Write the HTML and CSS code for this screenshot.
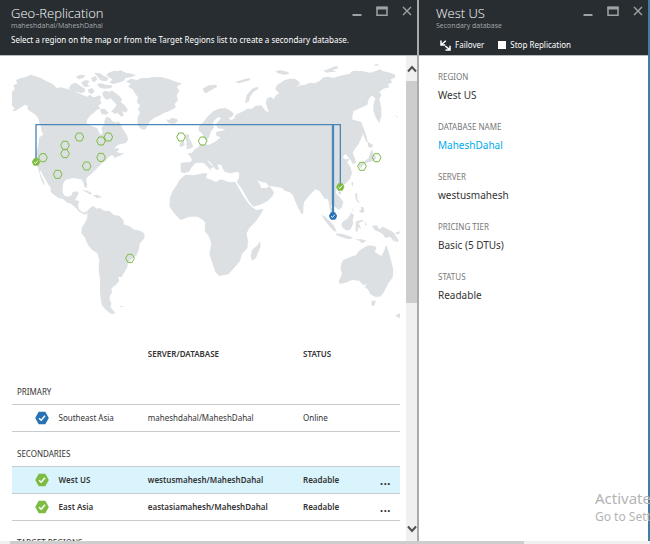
FILE: index.html
```html
<!DOCTYPE html>
<html lang="en">
<head>
    <meta charset="UTF-8">
    <meta name="viewport" content="width=device-width, initial-scale=1.0">
    <title>Geo-Replication</title>
    <link rel="stylesheet" href="styles.css">
</head>
<body>
    <!-- Shared shapes -->
    <svg class="symbols" aria-hidden="true">
        <symbol id="minimize" viewBox="0 0 10 10"><path d="M0.5 9H9.5" stroke="currentColor" stroke-width="2"/></symbol>
        <symbol id="maximize" viewBox="0 0 12 10"><path d="M1 1.5H11V9.3H1Z" fill="none" stroke="currentColor" stroke-width="1.5"/><path d="M0.5 2H11.5" stroke="currentColor" stroke-width="3"/></symbol>
        <symbol id="close" viewBox="0 0 10 10"><path d="M1 1L9 9M9 1L1 9" stroke="currentColor" stroke-width="1.4"/></symbol>
        <symbol id="check" viewBox="0 0 14 14"><path d="M3.7 0.8H10.3L13.8 7L10.3 13.2H3.7L0.2 7Z" fill="currentColor"/><path d="M4 7.2L6.2 9.2L10 4.8" fill="none" stroke="#fff" stroke-width="1.5"/></symbol>
        <symbol id="region" viewBox="-15 -15 30 30" overflow="visible"><path d="M-6.5 -12H6.5L13 0L6.5 12H-6.5L-13 0Z" fill="none" stroke="currentColor" stroke-width="3"/></symbol>
    </svg>

    <main class="blades">
        <section class="blade">
            <header class="blade-header">
                <div class="title-row">
                    <h1>Geo-Replication</h1>
                    <div class="window-buttons">
                        <button type="button" aria-label="Minimize"><svg width="10" height="10"><use href="#minimize"/></svg></button>
                        <button type="button" aria-label="Maximize"><svg width="12" height="10"><use href="#maximize"/></svg></button>
                        <button type="button" aria-label="Close"><svg width="10" height="10"><use href="#close"/></svg></button>
                    </div>
                </div>
                <p class="subtitle">maheshdahal/MaheshDahal</p>
                <p class="hint">Select a region on the map or from the Target Regions list to create a secondary database.</p>
            </header>

            <div class="blade-body">
                <div class="content">
                    <svg class="map" viewBox="36 12 1164 786" role="img" aria-label="World map">
                        <g class="land">
                            <!-- North America -->
                            <path d="M36 108L44 98 40 88 52 82 48 72 62 66 80 62 92 56 104 60 122 66 140 76 158 84 170 96 184 94 200 98 218 104 236 112 250 118 262 122 270 116 280 124 288 122 296 118 304 122 300 134 306 140 296 148 300 158 290 162 282 170 272 178 262 190 260 202 268 208 282 212 292 216 296 228 302 236 308 230 304 216 312 206 314 192 320 182 330 186 338 196 348 200 356 196 364 210 372 224 382 240 384 252 376 262 362 264 352 268 342 278 354 276 358 280 350 288 362 292 372 290 364 298 352 302 340 306 342 300 334 298 322 306 318 314 308 320 300 328 290 338 282 346 274 354 262 364 258 372 262 386 260 396 254 394 250 380 244 370 234 368 222 366 208 368 196 372 190 382 188 396 188 410 194 420 206 422 214 418 218 408 232 406 236 412 230 424 226 432 238 436 234 446 236 458 244 466 252 470 262 464 262 472 254 476 246 472 236 466 228 456 214 444 202 440 190 430 176 426 162 416 152 408 152 396 144 384 136 370 128 356 124 346 120 344 122 356 130 372 136 388 130 384 122 366 118 350 114 336 110 322 106 312 106 296 112 280 116 262 118 244 124 240 130 236 124 224 122 210 118 202 116 190 110 180 100 172 90 166 82 158 84 150 74 146 64 154 54 160 44 166 38 164 44 156 36 150Z"/>
                            <!-- Arctic islands -->
                            <path d="M206 98L212 86 226 80 236 86 246 92 254 98 256 106 244 112 232 108 218 106ZM228 62L240 56 256 58 250 66 236 70ZM244 78L258 72 270 76 262 84 270 90 256 94 248 88ZM274 66L286 60 292 70 284 78 276 76ZM290 84L304 82 316 86 336 88 334 96 316 98 300 96ZM264 100L276 96 284 106 276 114 266 110ZM282 50L300 52 312 60 326 66 320 76 304 74 294 64ZM318 56L330 48 344 44 356 46 360 42 378 50 398 54 408 58 392 64 376 66 372 74 354 80 340 84 328 80 338 70 326 64ZM306 110L316 104 326 108 336 104 348 112 358 120 366 130 362 138 374 148 384 162 376 170 366 164 372 178 364 182 352 170 344 174 334 166 344 156 350 146 340 136 332 126 322 132 312 126ZM300 160L314 158 326 170 318 176 304 174Z"/>
                            <!-- Greenland and Iceland -->
                            <path d="M378 76L394 68 412 72 424 66 444 66 462 62 486 64 504 68 530 78 546 82 530 92 538 104 530 118 534 132 524 144 528 154 510 164 494 170 476 180 462 186 450 196 444 206 438 218 432 222 422 218 414 208 412 196 414 182 420 170 414 160 420 148 410 138 414 124 404 112 398 100 384 92 392 84ZM498 190L508 192 514 186 530 188 534 196 522 204 506 202Z"/>
                            <!-- South America and the Caribbean -->
                            <path transform="translate(0 402)" d="M262 62L270 54 280 48 290 56 300 54 312 62 330 64 340 74 358 78 370 90 372 104 388 108 400 118 424 124 434 132 432 146 420 160 416 180 410 196 396 206 384 216 382 232 372 248 364 262 354 260 358 272 350 282 340 290 334 296 336 308 330 316 328 328 334 340 332 352 346 370 334 372 318 360 306 346 302 326 300 300 300 270 296 240 298 210 292 190 274 178 264 164 254 142 244 130 246 112 254 100 262 84ZM246 0L262 2 276 10 272 14 258 6ZM278 16L292 14 306 22 290 24ZM360 348L370 348 368 351 362 351ZM446 354L453 358 449 358ZM198 106L203 106 202 108Z"/>
                            <g transform="translate(480 120)">
                                <!-- Europe and Asia -->
                                <path d="M62 228L62 200 92 198 96 192 90 180 82 172 96 170 104 160 116 152 120 144 130 146 148 146 164 138 172 132 182 124 170 120 168 108 186 104 196 100 182 98 172 96 168 84 178 72 184 66 174 64 162 74 158 84 162 94 152 108 148 122 140 134 134 128 126 112 116 104 116 92 132 76 144 60 160 46 176 38 196 36 212 44 222 54 216 62 206 66 212 72 222 68 226 58 236 52 250 46 262 38 276 38 286 30 304 28 310 36 318 46 326 48 322 36 318 22 320 8 332 2 340 10 348 -2 358 -8 346 -20 350 -32 362 -40 374 -48 390 -52 404 -52 416 -44 420 -36 406 -26 420 -32 436 -34 450 -40 464 -38 480 -46 490 -56 504 -58 520 -54 538 -60 554 -64 568 -66 576 -74 588 -76 610 -74 630 -70 646 -74 660 -80 670 -74 690 -70 706 -64 704 -54 692 -50 696 -40 684 -36 688 -26 670 -22 658 -12 664 -2 658 10 664 36 664 60 658 82 648 66 640 44 640 26 646 8 636 -2 626 10 622 26 610 32 596 38 580 46 576 70 590 74 604 78 608 92 610 108 604 126 596 144 584 160 578 172 584 184 588 200 578 204 572 192 564 182 556 174 548 184 556 190 568 188 562 200 572 214 576 232 570 248 558 262 544 274 530 280 528 292 540 304 550 318 546 334 536 342 526 334 516 322 512 332 518 344 526 356 532 372 522 368 512 352 508 330 504 310 494 308 486 296 478 284 466 280 456 290 444 304 432 318 430 336 430 352 424 354 414 334 404 312 398 296 388 288 374 284 366 276 346 272 326 270 318 260 304 258 290 252 298 262 304 276 320 276 328 270 342 288 338 300 322 316 300 326 280 332 268 318 256 298 244 276 230 258 236 248 238 230 230 228 212 232 196 228 188 218 184 206 172 206 178 220 168 222 158 208 150 198 140 190 150 204 162 214 152 216 152 224 144 214 130 200 118 200 106 202 96 212 88 226 74 232Z"/>
                                <path d="M76 114L88 116 86 126 94 138 100 152 90 158 76 158 82 152 78 146 80 138 76 126ZM62 138L72 136 74 148 62 154 58 148ZM128 -22L146 -32 168 -34 172 -28 150 -16 138 -8 130 -14ZM255 20L260 -2 275 -20 292 -28 296 -22 280 -12 270 2 266 18ZM226 -42L244 -48 268 -54 272 -48 250 -42 236 -38ZM346 -74L360 -78 384 -72 388 -66 372 -64 354 -68ZM490 -76L504 -80 520 -88 534 -90 532 -82 516 -78 530 -72 512 -72 500 -70ZM642 -94L654 -96 656 -92 646 -90ZM704 58L714 62 712 65Z"/>
                                <!-- Africa and Madagascar -->
                                <path d="M76 236L100 238 130 232 142 232 138 246 156 252 168 258 182 250 206 258 226 258 236 276 250 300 262 318 276 334 290 342 310 338 304 352 288 376 268 396 260 412 264 436 262 456 246 474 240 496 222 516 206 534 178 540 166 528 156 498 148 474 154 444 148 424 134 404 136 380 126 370 112 362 88 362 62 372 42 352 28 330 30 304 38 284 50 268 58 252ZM300 436L302 450 288 486 276 494 272 480 276 462 290 450Z"/>
                                <!-- Japan, Sakhalin and the southeast islands -->
                                <path d="M606 84L612 100 620 122 624 142 618 136 608 112ZM624 138L640 148 634 156 624 152ZM636 160L640 174 650 186 640 196 626 198 612 204 604 216 596 214 598 204 614 196 626 186 630 172ZM576 256L580 262 578 272 574 264ZM534 288L544 286 542 296 536 294Z"/>
                                <path d="M484 356L496 362 510 376 524 392 530 408 520 404 506 388 492 370ZM528 412L548 414 566 420 580 426 566 430 546 424 530 418ZM584 430L604 430 620 434 606 442 598 434ZM550 376L562 368 574 350 582 358 578 372 580 382 572 400 562 404 548 396 544 384ZM588 376L604 372 612 374 596 382 604 400 594 394 592 410 586 402ZM586 290L592 294 592 310 600 322 592 318 586 306ZM602 332L610 334 614 346 606 352 596 344 604 342ZM584 332L578 346 576 344ZM614 376L620 386 616 390ZM636 390L650 388 658 400 668 392 684 400 702 410 706 418 716 432 714 438 700 434 690 422 676 426 670 416 658 408 644 402ZM706 410L718 406 720 412 710 416Z"/>
                                <!-- Australia and New Zealand -->
                                <path transform="translate(120 282)" d="M424 220L430 210 458 198 468 196 476 184 490 174 504 166 522 168 530 172 524 186 544 198 552 184 558 164 564 180 572 206 580 240 578 262 564 282 550 310 540 320 524 320 510 312 504 298 494 292 500 282 490 286 478 272 456 270 436 278 420 282 416 274 426 252 422 236ZM514 332L528 332 522 348 516 348ZM586 376L600 370 600 384 592 382ZM205 192L209 192 209 194Z"/>
                            </g>
                        </g>
                        <!-- Replication links -->
                        <path class="link" d="M108 318V206H1021V393"/>
                        <path class="link link-wide" d="M999 206V480"/>
                        <!-- Available regions -->
                        <g class="green">
                            <use href="#region" x="223" y="228" width="30" height="30"/>
                            <use href="#region" x="180" y="253" width="30" height="30"/>
                            <use href="#region" x="180" y="278" width="30" height="30"/>
                            <use href="#region" x="114" y="290" width="30" height="30"/>
                            <use href="#region" x="158" y="340" width="30" height="30"/>
                            <use href="#region" x="245" y="315" width="30" height="30"/>
                            <use href="#region" x="288" y="289" width="30" height="30"/>
                            <use href="#region" x="288" y="240" width="30" height="30"/>
                            <use href="#region" x="310" y="228" width="30" height="30"/>
                            <use href="#region" x="528" y="228" width="30" height="30"/>
                            <use href="#region" x="593" y="240" width="30" height="30"/>
                            <use href="#region" x="375" y="592" width="30" height="30"/>
                            <use href="#region" x="1071" y="316" width="30" height="30"/>
                            <use href="#region" x="1115" y="290" width="30" height="30"/>
                            <use href="#check" x="95" y="305" width="26" height="26"/>
                            <use href="#check" x="1008" y="380" width="26" height="26"/>
                        </g>
                        <use class="blue" href="#check" x="986" y="467" width="26" height="26"/>
                    </svg>

                    <table class="regions">
                        <colgroup>
                            <col class="col-icon">
                            <col class="col-region">
                            <col class="col-server">
                            <col class="col-status">
                            <col class="col-more">
                        </colgroup>
                        <thead>
                            <tr>
                                <td></td>
                                <td></td>
                                <th scope="col">SERVER/DATABASE</th>
                                <th scope="col">STATUS</th>
                                <td></td>
                            </tr>
                        </thead>
                        <tbody>
                            <tr class="group"><th colspan="5">PRIMARY</th></tr>
                            <tr>
                                <td><svg class="badge blue" width="14" height="14"><use href="#check"/></svg></td>
                                <td>Southeast Asia</td>
                                <td>maheshdahal/MaheshDahal</td>
                                <td>Online</td>
                                <td></td>
                            </tr>
                        </tbody>
                        <tbody class="secondaries">
                            <tr class="group"><th colspan="5">SECONDARIES</th></tr>
                            <tr class="selected">
                                <td><svg class="badge green" width="14" height="14"><use href="#check"/></svg></td>
                                <td>West US</td>
                                <td>westusmahesh/MaheshDahal</td>
                                <td>Readable</td>
                                <td><button type="button" class="more" aria-label="More">...</button></td>
                            </tr>
                            <tr>
                                <td><svg class="badge green" width="14" height="14"><use href="#check"/></svg></td>
                                <td>East Asia</td>
                                <td>eastasiamahesh/MaheshDahal</td>
                                <td>Readable</td>
                                <td><button type="button" class="more" aria-label="More">...</button></td>
                            </tr>
                        </tbody>
                        <tbody>
                            <tr class="group"><th colspan="5">TARGET REGIONS</th></tr>
                        </tbody>
                    </table>
                </div>

                <div class="scrollbar">
                    <button type="button" aria-label="Scroll up"><svg width="10" height="8" viewBox="0 0 10 8"><path d="M1 6.5L5 2L9 6.5" fill="none" stroke="#505050" stroke-width="2"/></svg></button>
                    <div class="track"><div class="thumb"></div></div>
                    <button type="button" aria-label="Scroll down"><svg width="10" height="8" viewBox="0 0 10 8"><path d="M1 1.5L5 6L9 1.5" fill="none" stroke="#505050" stroke-width="2"/></svg></button>
                </div>
            </div>
        </section>

        <section class="blade blade-detail">
            <header class="blade-header">
                <div class="title-row">
                    <h2>West US</h2>
                    <div class="window-buttons">
                        <button type="button" aria-label="Minimize"><svg width="10" height="10"><use href="#minimize"/></svg></button>
                        <button type="button" aria-label="Maximize"><svg width="12" height="10"><use href="#maximize"/></svg></button>
                        <button type="button" aria-label="Close"><svg width="10" height="10"><use href="#close"/></svg></button>
                    </div>
                </div>
                <p class="subtitle">Secondary database</p>
                <div class="commands">
                    <button type="button">
                        <svg width="11" height="11" viewBox="0 0 11 11"><path d="M1 0.5V5H5.2M1.3 4.7L5.8 0.8M10 5.8V10H5.5M9.7 9.7L5.2 6" fill="none" stroke="#fff" stroke-width="1.5"/></svg>
                        Failover
                    </button>
                    <button type="button">
                        <svg width="8" height="8"><rect width="8" height="8" fill="#fff"/></svg>
                        Stop Replication
                    </button>
                </div>
            </header>

            <dl class="properties">
                <div><dt>REGION</dt><dd>West US</dd></div>
                <div><dt>DATABASE NAME</dt><dd><a href="#">MaheshDahal</a></dd></div>
                <div><dt>SERVER</dt><dd>westusmahesh</dd></div>
                <div><dt>PRICING TIER</dt><dd>Basic (5 DTUs)</dd></div>
                <div><dt>STATUS</dt><dd>Readable</dd></div>
            </dl>
        </section>
    </main>

    <div class="page-scroll"><div class="page-thumb"></div></div>

    <div class="watermark">
        <p class="watermark-title">Activate</p>
        <p>Go to Sett</p>
    </div>
</body>
</html>
```

FILE: styles.css
```css
/* General Styles */
* {
    box-sizing: border-box;
}

body {
    display: flex;
    flex-direction: column;
    height: 100vh;
    margin: 0;
    overflow: hidden;
    font-family: "Noto Sans", "Open Sans", sans-serif;
    font-size: 8px;
    line-height: 16px;
    color: #333;
    background: #fff;
}

h1, h2, p, dl, dd {
    margin: 0;
}

button {
    display: flex;
    align-items: center;
    justify-content: center;
    padding: 0;
    border: none;
    background: none;
    color: inherit;
    font: inherit;
    cursor: pointer;
}

.symbols {
    position: absolute;
    width: 0;
    height: 0;
}

.green {
    color: #7dbb42;
}

.blue {
    color: #2672b5;
}

/* Blades */
.blades {
    flex: 1;
    min-height: 0;
    display: grid;
    grid-template-columns: minmax(0, 419fr) minmax(0, 231fr);
    grid-template-rows: minmax(0, 1fr);
}

.blade {
    display: flex;
    flex-direction: column;
    min-height: 0;
    border-right: 2px solid #aaa;
}

.blade-detail {
    border-right-color: #3c7fa3;
}

.blade-header {
    flex: none;
    height: 56px;
    padding: 5px 5px 0 11px;
    background: #272d31;
    border-bottom: 1px solid #b9bcbe;
    color: #fff;
}

.blade-detail .blade-header {
    padding-left: 17px;
}

.title-row {
    display: flex;
    justify-content: space-between;
    height: 15px;
}

h1, h2 {
    font-family: "Open Sans", "Noto Sans", sans-serif;
    font-size: 13px;
    line-height: 17px;
    font-weight: 300;
}

.window-buttons {
    display: flex;
    align-items: center;
    gap: 14px;
    height: 12px;
    color: #9fa3a5;
}

.subtitle {
    font-family: "Open Sans", "Noto Sans", sans-serif;
    font-size: 7px;
    line-height: 12px;
    color: #a5a9ab;
}

.commands {
    display: flex;
    gap: 14px;
    padding-left: 4px;
}

.commands button {
    gap: 4px;
    padding-top: 5px;
}

.blade-body {
    flex: 1;
    min-height: 0;
    display: flex;
}

.content {
    flex: 1;
    min-width: 0;
    overflow: hidden;
    padding: 4px 6px 0 12px;
}

/* Map */
.map {
    display: block;
    width: 100%;
}

.land {
    fill: #dce0e3;
}

.link {
    fill: none;
    stroke: #4a86b8;
    stroke-width: 4;
}

.link-wide {
    stroke-width: 7;
}

/* Regions table */
.regions {
    width: 100%;
    margin-top: 10px;
    table-layout: fixed;
    border-collapse: collapse;
    text-align: left;
}

.col-icon { width: 12%; }
.col-region { width: 23%; }
.col-server { width: 40%; }
.col-status { width: 18%; }
.col-more { width: 7%; }

.regions td,
.regions th {
    padding: 0;
}

.regions thead th {
    padding: 14px 0 8px;
    font-weight: 600;
}

.regions tbody tr {
    height: 27px;
    border-bottom: 1px solid #c8cbcd;
}

.regions .group {
    height: 34px;
}

.regions .group th {
    padding: 14px 5px 4px;
    font-weight: 400;
}

.secondaries td {
    font-weight: 600;
}

.selected {
    background: #d9f4fd;
}

.badge {
    display: block;
    margin-left: 23px;
}

.more {
    margin-left: 7px;
    font-size: 13px;
    font-weight: 600;
}

/* Scrollbars */
.scrollbar {
    flex: none;
    display: flex;
    flex-direction: column;
    width: 11px;
    background: #f0f0f0;
}

.scrollbar button {
    height: 25px;
}

.track {
    flex: 1;
}

.thumb {
    height: 51%;
    background: #cdcdcd;
}

.page-scroll {
    flex: none;
    height: 3px;
    background: #f0f0f0;
}

.page-thumb {
    width: 79%;
    height: 100%;
    margin-left: 10px;
    background: #cdcdcd;
}

/* Properties */
.properties {
    display: flex;
    flex-direction: column;
    gap: 14px;
    padding: 13px 19px;
}

.properties dt {
    line-height: 16px;
    color: #777;
}

.properties dd {
    font-size: 10px;
    line-height: 20px;
}

.properties a {
    color: #00abec;
    text-decoration: none;
}

/* Activation notice lies over the blades */
.watermark {
    position: absolute;
    right: 0;
    bottom: 18px;
    width: 55px;
    overflow: hidden;
    font-size: 12px;
    line-height: 18px;
    white-space: nowrap;
    color: #b4b4b4;
}

.watermark-title {
    font-size: 15px;
    line-height: 20px;
}
```
